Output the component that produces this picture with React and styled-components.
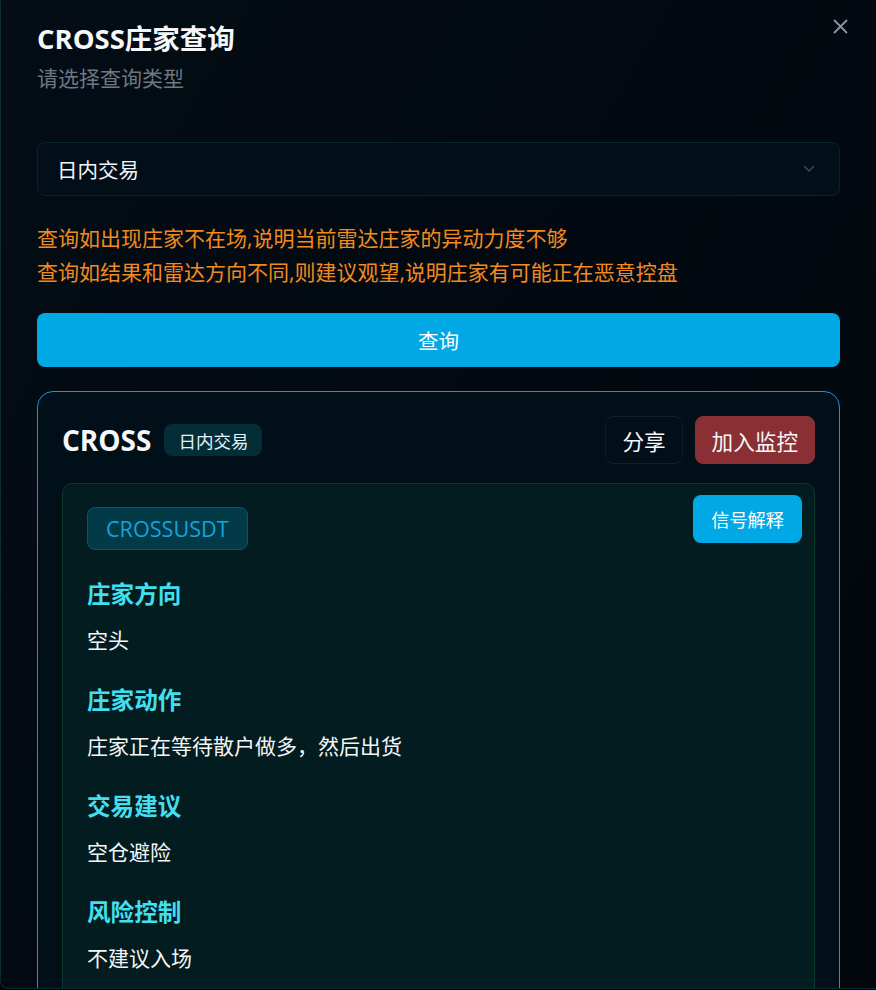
import React from "react";
import styled, { createGlobalStyle } from "styled-components";

const Global = createGlobalStyle`
  html, body { margin: 0; padding: 0; background: #000; }
  body { font-family: "Open Sans", "Noto Sans CJK SC", sans-serif; overflow: hidden; }
  * { box-sizing: border-box; }
`;

const Dialog = styled.div`
  position: relative;
  width: 100vw;
  height: 989px;
  overflow: hidden;
  background: linear-gradient(120deg, #040c15 0%, #020910 55%, #01070c 100%);
  border-left: 1px solid #0c2c34;
  border-bottom: 1px solid #0c2c34;
  border-bottom-left-radius: 8px;
  padding: 22px 36px 0 36px;
  color: #f3f6f8;
`;

const Close = styled.button`
  position: absolute;
  top: 18px;
  right: 28px;
  width: 16px;
  height: 16px;
  padding: 0;
  border: none;
  background: transparent;
  color: #8e959c;
  display: flex;
  align-items: center;
  justify-content: center;
`;

const Title = styled.h1`
  margin: 0;
  font-size: 27.5px;
  line-height: 34px;
  font-weight: 700;
  color: #f5f7f8;
`;

const Subtitle = styled.p`
  margin: 6px 0 0;
  font-size: 21px;
  line-height: 32px;
  color: #6f7780;
`;

const Select = styled.div`
  margin-top: 48px;
  height: 54px;
  border: 1px solid #0a222b;
  border-radius: 8px;
  background: #020f18;
  display: flex;
  align-items: center;
  justify-content: space-between;
  padding: 0 24px 0 19px;
  font-size: 20.5px;
  color: #f3f6f8;
`;

const Notice = styled.div`
  margin-top: 25px;
  color: #f28a1e;
  font-size: 21px;
  line-height: 34px;
`;

const QueryButton = styled.button`
  margin-top: 24px;
  width: 100%;
  height: 54px;
  border: none;
  border-radius: 8px;
  background: #00a9e6;
  color: #ffffff;
  font-family: inherit;
  font-size: 20.5px;
`;

const ResultCard = styled.div`
  margin-top: 24px;
  border: 1px solid #1a98c6;
  border-radius: 16px;
  background: #010f18;
  padding: 24px 24px 40px;
`;

const Header = styled.div`
  display: flex;
  align-items: center;
  height: 48px;
`;

const Symbol = styled.span`
  font-size: 28px;
  font-weight: 700;
  color: #f5f7f8;
  line-height: 1;
`;

const ModeTag = styled.span`
  margin-left: 13px;
  height: 32px;
  display: inline-flex;
  align-items: center;
  padding: 0 14px;
  border-radius: 8px;
  background: #032e38;
  color: #e6f3f4;
  font-size: 17.5px;
`;

const Actions = styled.div`
  margin-left: auto;
  display: flex;
  gap: 12px;
`;

const ActionButton = styled.button`
  height: 48px;
  padding: 0 16px;
  border-radius: 8px;
  border: 1px solid ${(p) => (p.$danger ? "#8a2f33" : "#0b1f29")};
  background: ${(p) => (p.$danger ? "#8a2f33" : "#020f18")};
  color: #f5f7f8;
  font-family: inherit;
  font-size: 21.6px;
`;

const Inner = styled.div`
  position: relative;
  margin-top: 19px;
  border: 1px solid #0c3a2b;
  border-radius: 10px;
  background: #031c1f;
  padding: 23px 24px 30px;
`;

const PairTag = styled.span`
  display: inline-flex;
  align-items: center;
  height: 43px;
  padding: 0 18px;
  border: 1px solid #0b5468;
  border-radius: 8px;
  background: #033a48;
  color: #13a4dc;
  font-size: 21.6px;
`;

const ExplainButton = styled.button`
  position: absolute;
  top: 11px;
  right: 12px;
  height: 48px;
  padding: 0 18px;
  border: none;
  border-radius: 8px;
  background: #00a9e6;
  color: #ffffff;
  font-family: inherit;
  font-size: 18.2px;
`;

const Section = styled.section`
  margin-top: 26px;
`;

const Heading = styled.h3`
  margin: 0;
  font-size: 23.6px;
  line-height: 36px;
  font-weight: 700;
  color: #42dfee;
`;

const Body = styled.p`
  margin: 12px 0 0;
  font-size: 21px;
  line-height: 32px;
  color: #f3f6f8;
`;

const sections = [
  ["庄家方向", "空头"],
  ["庄家动作", "庄家正在等待散户做多，然后出货"],
  ["交易建议", "空仓避险"],
  ["风险控制", "不建议入场"],
];

export default function App() {
  return (
    <>
      <Global />
      <Dialog>
        <Close aria-label="close">
          <svg width="15" height="15" viewBox="0 0 15 15">
            <path d="M1.5 1.5 L13.5 13.5 M13.5 1.5 L1.5 13.5" stroke="currentColor" strokeWidth="1.8" strokeLinecap="round" />
          </svg>
        </Close>
        <Title>CROSS庄家查询</Title>
        <Subtitle>请选择查询类型</Subtitle>
        <Select>
          <span>日内交易</span>
          <svg width="12" height="8" viewBox="0 0 12 8">
            <path d="M1.5 1.5 L6 6 L10.5 1.5" fill="none" stroke="#2b5660" strokeWidth="1.4" strokeLinecap="round" />
          </svg>
        </Select>
        <Notice>
          <div>查询如出现庄家不在场,说明当前雷达庄家的异动力度不够</div>
          <div>查询如结果和雷达方向不同,则建议观望,说明庄家有可能正在恶意控盘</div>
        </Notice>
        <QueryButton>查询</QueryButton>
        <ResultCard>
          <Header>
            <Symbol>CROSS</Symbol>
            <ModeTag>日内交易</ModeTag>
            <Actions>
              <ActionButton>分享</ActionButton>
              <ActionButton $danger>加入监控</ActionButton>
            </Actions>
          </Header>
          <Inner>
            <PairTag>CROSSUSDT</PairTag>
            <ExplainButton>信号解释</ExplainButton>
            {sections.map(([h, b]) => (
              <Section key={h}>
                <Heading>{h}</Heading>
                <Body>{b}</Body>
              </Section>
            ))}
          </Inner>
        </ResultCard>
      </Dialog>
    </>
  );
}
